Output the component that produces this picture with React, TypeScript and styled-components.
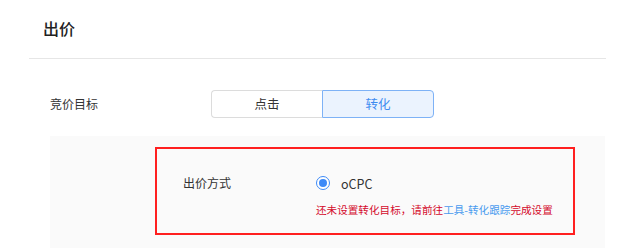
import React, { useState } from 'react';
import styled, { createGlobalStyle } from 'styled-components';

const GlobalStyle = createGlobalStyle`
  html, body {
    margin: 0;
    padding: 0;
    background: #fff;
  }
  body {
    font-family: 'Noto Sans CJK SC', 'Noto Sans', 'Liberation Sans', sans-serif;
    color: #333;
  }
`;

const Section = styled.div`
  width: 577px;
  margin-left: 29px;
`;

const Header = styled.div`
  height: 59px;
  display: flex;
  align-items: center;
  padding-left: 14px;
  padding-bottom: 3px;
  border-bottom: 1px solid #e6e6e6;
  box-sizing: border-box;
`;

const Title = styled.h2`
  margin: 0;
  font-size: 16px;
  font-weight: 500;
  color: #222;
  line-height: 20px;
`;

const Row = styled.div`
  display: flex;
  align-items: center;
  height: 77px;
  box-sizing: border-box;
  padding-top: 12px;
  padding-left: 21px;
`;

const Label = styled.span<{ width: number }>`
  width: ${(p) => p.width}px;
  flex-shrink: 0;
  font-size: 12px;
  color: #333;
  line-height: 20px;
`;

const Segmented = styled.div`
  display: flex;
  height: 28px;
`;

const Segment = styled.button<{ active?: boolean }>`
  width: ${(p) => (p.active ? 112 : 111)}px;
  height: 28px;
  box-sizing: border-box;
  font-family: inherit;
  font-size: 12.5px;
  cursor: pointer;
  background: ${(p) => (p.active ? '#ebf3fe' : '#fff')};
  color: ${(p) => (p.active ? '#3f8cf0' : '#333')};
  border: 1px solid ${(p) => (p.active ? '#7eb2f6' : '#dcdcdc')};
  border-radius: ${(p) => (p.active ? '0 4px 4px 0' : '4px 0 0 4px')};
  ${(p) => (p.active ? '' : 'border-right: none;')}
  padding: 0;
`;

const Panel = styled.div`
  margin-left: 21px;
  margin-right: 1px;
  background: #fafafa;
  padding: 11px 30px 13px 105px;
`;

const Highlight = styled.div`
  border: 2px solid #ff1f1f;
  padding: 24px 0 15px 26px;
`;

const FieldRow = styled.div`
  display: flex;
  align-items: center;
  height: 20px;
`;

const RadioOption = styled.label`
  display: flex;
  align-items: center;
  gap: 11px;
  font-size: 12.5px;
  color: #333;
  cursor: pointer;
`;

const RadioCircle = styled.span<{ checked?: boolean }>`
  width: 14px;
  height: 14px;
  box-sizing: border-box;
  border-radius: 50%;
  border: 1px solid #3d8af7;
  display: flex;
  align-items: center;
  justify-content: center;
  background: #fff;
  &::after {
    content: '';
    width: 8px;
    height: 8px;
    border-radius: 50%;
    background: ${(p) => (p.checked ? '#3d8af7' : 'transparent')};
  }
`;

const Hint = styled.div`
  margin-top: 9px;
  margin-left: 133px;
  font-size: 10.6px;
  line-height: 16px;
  color: #d40a2c;
  white-space: nowrap;
`;

const HintLink = styled.a`
  color: #4a9bef;
  text-decoration: none;
`;

export default function App() {
  const [goal, setGoal] = useState<'click' | 'convert'>('convert');

  return (
    <>
      <GlobalStyle />
      <Section>
        <Header>
          <Title>出价</Title>
        </Header>
        <Row>
          <Label width={161}>竞价目标</Label>
          <Segmented>
            <Segment active={goal === 'click'} onClick={() => setGoal('click')}>
              点击
            </Segment>
            <Segment active={goal === 'convert'} onClick={() => setGoal('convert')}>
              转化
            </Segment>
          </Segmented>
        </Row>
        <Panel>
          <Highlight>
            <FieldRow>
              <Label width={133}>出价方式</Label>
              <RadioOption>
                <RadioCircle checked />
                oCPC
              </RadioOption>
            </FieldRow>
            <Hint>
              还未设置转化目标，请前往<HintLink href="#">工具-转化跟踪</HintLink>完成设置
            </Hint>
          </Highlight>
        </Panel>
      </Section>
    </>
  );
}
